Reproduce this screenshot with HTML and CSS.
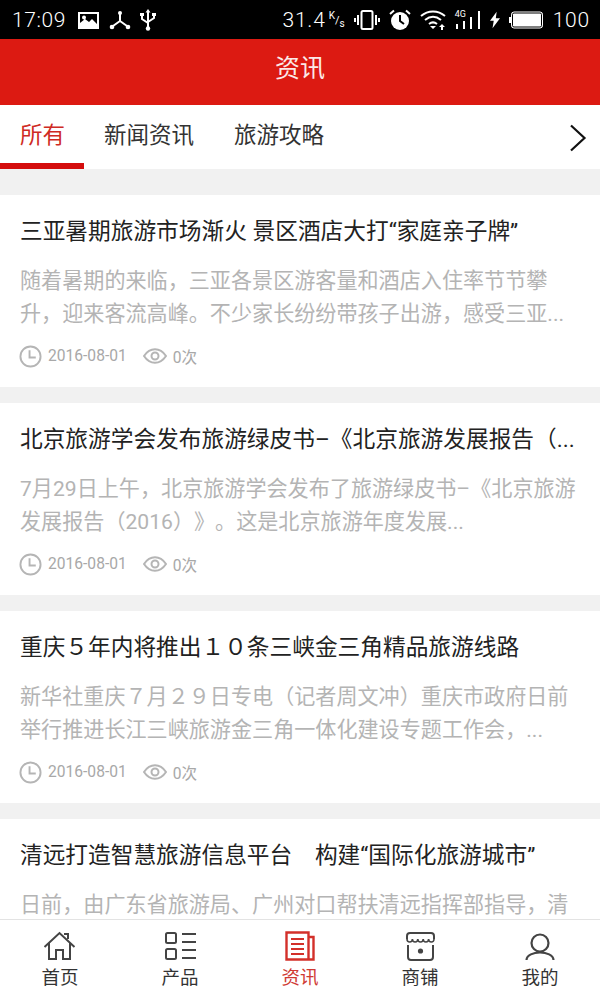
FILE: index.html
```html
<!DOCTYPE html>
<html lang="zh-CN">
    <head>
        <meta charset="UTF-8" />
        <meta name="viewport" content="width=device-width, initial-scale=1.0" />
        <title>资讯</title>
        <link rel="stylesheet" href="styles.css">
    </head>
    <body>
        <div class="status-bar">
            <div class="status-group">
                <span class="status-time">17:09</span>
                <svg width="22" height="18" viewBox="0 0 22 18"><path fill="#fff" fill-rule="evenodd" d="M0 1h21v17H0zM2 3v9l5-4 4 3 3-3 5 5V3zM6 4.500a2 2 0 1 1 0 4 2 2 0 0 1 0-4z"/></svg>
                <svg width="22" height="20" viewBox="0 0 22 20"><path fill="none" stroke="#fff" stroke-width="2" d="M11 3v8M11 11l-7 5M11 11l7 5"/><circle cx="11" cy="3" r="2" fill="#fff"/><circle cx="3" cy="17" r="2.300" fill="#fff"/><circle cx="19" cy="17" r="2.300" fill="#fff"/></svg>
                <svg width="16" height="22" viewBox="0 0 16 22"><path fill="none" stroke="#fff" stroke-width="2" d="M8 3v16M2 6v4l6 4M14 6v3l-6 4"/><path fill="#fff" d="M8 0l2.500 3.500h-5zM0 4h4v3H0zM12 4h4v3h-4z"/><circle cx="8" cy="19.500" r="2.200" fill="#fff"/></svg>
            </div>
            <div class="status-group">
                <span class="status-text">31.4</span>
                <span class="status-speed"><sup>K</sup>/<sub>s</sub></span>
                <svg width="26" height="20" viewBox="0 0 26 20"><rect x="7.500" y="1" width="11" height="18" rx="1.500" fill="none" stroke="#fff" stroke-width="2"/><path stroke="#fff" stroke-width="2" d="M4 5v10M1 8v4M22 5v10M25 8v4"/></svg>
                <svg width="22" height="22" viewBox="0 0 22 22"><circle cx="11" cy="12" r="9" fill="#fff"/><path fill="none" stroke="#000" stroke-width="2" d="M11 6v6l4 3"/><path stroke="#fff" stroke-width="2" d="M1 5l4-3.500M21 5l-4-3.500"/></svg>
                <svg width="26" height="20" viewBox="0 0 26 20"><path fill="none" stroke="#fff" stroke-width="2" d="M1 6c7-6 17-6 24 0M5 10c5-4 11-4 16 0M9 14c2.500-2 5.500-2 8 0"/><path fill="#fff" d="M10 16h6l-3 3zM21 20v-3h-2l3-3 3 3h-2v3z"/></svg>
                <span class="status-signal">
                    <span class="status-4g">4G</span>
                    <svg width="26" height="20" viewBox="0 0 26 20"><path stroke="#fff" stroke-width="2" d="M2 14v5M9 11v8M16 7v12M24 1v18"/></svg>
                </span>
                <svg width="10" height="20" viewBox="0 0 12 20"><path fill="#fff" d="M8 0L0 11h4.500L3 20l9-12H7z"/></svg>
                <svg width="35" height="20" viewBox="0 0 35 20"><rect x="2.500" y="2" width="31" height="16" rx="2.500" fill="#fff" stroke="#fff"/><rect x="3.500" y="3" width="29" height="14" rx="1.500" fill="#fff" stroke="#000"/><rect y="7" width="2" height="6" fill="#fff"/></svg>
                <span class="status-text">100</span>
            </div>
        </div>

        <header class="top-bar">资讯</header>

        <nav class="tabs">
            <a class="tab tab-active">所有</a>
            <a class="tab">新闻资讯</a>
            <a class="tab">旅游攻略</a>
            <svg class="tab-more" width="18" height="28" viewBox="0 0 18 28"><path fill="none" stroke="#111" stroke-width="2.200" d="M2 1.500L15.500 14 2 26.500"/></svg>
        </nav>

        <main class="news-list">
            <article class="news-item">
                <h2>三亚暑期旅游市场渐火 景区酒店大打“家庭亲子牌”</h2>
                <p>随着暑期的来临，三亚各景区游客量和酒店入住率节节攀升，迎来客流高峰。不少家长纷纷带孩子出游，感受三亚...</p>
                <div class="news-meta">
                    <svg width="23" height="23" viewBox="0 0 24 24"><circle cx="12" cy="12" r="10.500" fill="none" stroke="#b5b5b5" stroke-width="2"/><path fill="none" stroke="#b5b5b5" stroke-width="2" d="M11 5.500V13h6.500"/></svg>
                    <span class="news-date">2016-08-01</span>
                    <svg width="24" height="16" viewBox="0 0 24 16"><path fill="none" stroke="#b5b5b5" stroke-width="2" d="M1 8c6-9 16-9 22 0-6 9-16 9-22 0z"/><circle cx="12" cy="8" r="3.500" fill="none" stroke="#b5b5b5" stroke-width="2"/></svg>
                    <span class="news-views">0次</span>
                </div>
            </article>
            <article class="news-item">
                <h2>北京旅游学会发布旅游绿皮书–《北京旅游发展报告（...</h2>
                <p>7月29日上午，北京旅游学会发布了旅游绿皮书–《北京旅游发展报告（2016）》。这是北京旅游年度发展...</p>
                <div class="news-meta">
                    <svg width="23" height="23" viewBox="0 0 24 24"><circle cx="12" cy="12" r="10.500" fill="none" stroke="#b5b5b5" stroke-width="2"/><path fill="none" stroke="#b5b5b5" stroke-width="2" d="M11 5.500V13h6.500"/></svg>
                    <span class="news-date">2016-08-01</span>
                    <svg width="24" height="16" viewBox="0 0 24 16"><path fill="none" stroke="#b5b5b5" stroke-width="2" d="M1 8c6-9 16-9 22 0-6 9-16 9-22 0z"/><circle cx="12" cy="8" r="3.500" fill="none" stroke="#b5b5b5" stroke-width="2"/></svg>
                    <span class="news-views">0次</span>
                </div>
            </article>
            <article class="news-item">
                <h2>重庆５年内将推出１０条三峡金三角精品旅游线路</h2>
                <p>新华社重庆７月２９日专电（记者周文冲）重庆市政府日前举行推进长江三峡旅游金三角一体化建设专题工作会，...</p>
                <div class="news-meta">
                    <svg width="23" height="23" viewBox="0 0 24 24"><circle cx="12" cy="12" r="10.500" fill="none" stroke="#b5b5b5" stroke-width="2"/><path fill="none" stroke="#b5b5b5" stroke-width="2" d="M11 5.500V13h6.500"/></svg>
                    <span class="news-date">2016-08-01</span>
                    <svg width="24" height="16" viewBox="0 0 24 16"><path fill="none" stroke="#b5b5b5" stroke-width="2" d="M1 8c6-9 16-9 22 0-6 9-16 9-22 0z"/><circle cx="12" cy="8" r="3.500" fill="none" stroke="#b5b5b5" stroke-width="2"/></svg>
                    <span class="news-views">0次</span>
                </div>
            </article>
            <article class="news-item">
                <h2>清远打造智慧旅游信息平台　构建“国际化旅游城市”</h2>
                <p>日前，由广东省旅游局、广州对口帮扶清远指挥部指导，清</p>
            </article>
        </main>

        <footer class="bottom-nav">
            <a class="nav-item">
                <svg width="34" height="30" viewBox="0 0 34 30"><path fill="none" stroke="#444" stroke-width="2" d="M1.500 16L16.500 2l15 14M6 12.500V28h7v-9h7v9h7V12.500M25 8V3h-4"/></svg>
                <span>首页</span>
            </a>
            <a class="nav-item">
                <svg width="34" height="30" viewBox="0 0 34 30"><g fill="none" stroke="#444" stroke-width="2"><rect x="3" y="2" width="10" height="10" rx="1.500"/><rect x="3" y="18" width="10" height="10" rx="1.500"/><path d="M19 3h14M19 11h14M19 19h14M19 27h14"/></g></svg>
                <span>产品</span>
            </a>
            <a class="nav-item nav-active">
                <svg width="34" height="30" viewBox="0 0 34 30"><g fill="none" stroke="#d3302a"><path stroke-width="2.400" d="M3.500 1.500h22v27h-22zM25.500 6h5v22.500h-5"/><path stroke-width="2" d="M8 8h13M8 13h13M8 18h13M8 23h13"/></g></svg>
                <span>资讯</span>
            </a>
            <a class="nav-item">
                <svg width="34" height="30" viewBox="0 0 34 30"><g fill="none" stroke="#444" stroke-width="2"><path d="M4 8V5Q4 2 7 2h21q3 0 3 3v3"/><path stroke-width="1.600" d="M4 8q0 3 2.700 3t2.700-3q0 3 2.700 3t2.700-3q0 3 2.700 3t2.700-3q0 3 2.700 3t2.700-3q0 3 2.700 3T31 8"/><path d="M5 14v12q0 3 3 3h19q3 0 3-3V14"/></g><circle cx="17.500" cy="20" r="2.600" fill="#444"/></svg>
                <span>商铺</span>
            </a>
            <a class="nav-item">
                <svg width="34" height="30" viewBox="0 0 34 30"><g fill="none" stroke="#444" stroke-width="2.200"><circle cx="17" cy="12" r="8.500"/><path d="M3.500 29C4 19 30 19 30.500 29"/></g></svg>
                <span>我的</span>
            </a>
        </footer>
    </body>
</html>
```

FILE: styles.css
```css
* {
    box-sizing: border-box;
}

html,
body {
    margin: 0;
    height: 100%;
}

body {
    display: flex;
    flex-direction: column;
    height: 1000px;
    overflow: hidden;
    font-family: Roboto, "Noto Sans CJK SC", sans-serif;
    text-spacing-trim: space-all;
    background-color: #f1f1f1;
}

svg {
    display: block;
    flex: none;
}

/* 状态栏 */
.status-bar {
    display: flex;
    justify-content: space-between;
    align-items: center;
    flex: none;
    height: 39px;
    padding: 0 10px 0 12px;
    background-color: #000;
    color: #fff;
}

.status-group {
    display: flex;
    align-items: center;
    gap: 9px;
}

.status-time {
    margin-right: 3px;
    font-size: 21px;
    font-weight: 300;
    letter-spacing: 0.6px;
}

.status-text {
    font-size: 21px;
    font-weight: 300;
    letter-spacing: 0.8px;
}

.status-speed {
    margin-left: -6px;
    font-size: 11px;
}

.status-speed sup,
.status-speed sub {
    font-size: 10px;
}

.status-signal {
    position: relative;
    display: block;
}

.status-4g {
    position: absolute;
    left: 0;
    top: -1px;
    font-size: 9px;
}

/* 顶部标题 */
.top-bar {
    flex: none;
    height: 66px;
    line-height: 60px;
    text-align: center;
    font-size: 25px;
    color: #fbe9e8;
    background-color: #dc1a12;
}

/* 分类标签 */
.tabs {
    display: flex;
    align-items: stretch;
    flex: none;
    position: relative;
    height: 64px;
    background-color: #fff;
}

.tab {
    display: block;
    padding: 0 20px;
    line-height: 60px;
    font-size: 22.500px;
    color: #333;
}

.tab-active {
    width: 84px;
    padding: 0;
    padding-left: 20px;
    color: #cf2a24;
    border-bottom: 6px solid #d40d0d;
}

.tab-more {
    position: absolute;
    right: 13px;
    top: 19px;
}

/* 资讯列表 */
.news-list {
    flex: 1;
    min-height: 0;
    overflow: hidden;
    padding-top: 26px;
}

.news-item {
    height: 192px;
    margin-bottom: 16px;
    padding: 21px 20px 0;
    background-color: #fff;
}

.news-item h2 {
    margin: 0;
    font-size: 22.700px;
    font-weight: 400;
    line-height: 32px;
    color: #222;
    white-space: nowrap;
    overflow: hidden;
}

.news-item p {
    margin: 16px 0 0;
    height: 66px;
    font-size: 21.100px;
    line-height: 33px;
    color: #b4b4b4;
    overflow: hidden;
}

.news-meta {
    display: flex;
    align-items: center;
    margin: 14px 0 0 -1px;
    height: 24px;
    font-size: 15.600px;
    color: #a8a8a8;
}

.news-date {
    margin: 0 16px 0 6px;
}

.news-views {
    margin-left: 6px;
}

/* 底部导航 */
.bottom-nav {
    display: flex;
    flex: none;
    height: 81px;
    padding-top: 11px;
    background-color: #fff;
    border-top: 1px solid #e3e3e3;
}

.nav-item {
    display: flex;
    flex-direction: column;
    align-items: center;
    flex: 1;
    font-size: 18.500px;
    line-height: 28px;
    color: #333;
}

.nav-item span {
    margin-top: 3px;
}

.nav-active {
    color: #cf3a34;
}
```
